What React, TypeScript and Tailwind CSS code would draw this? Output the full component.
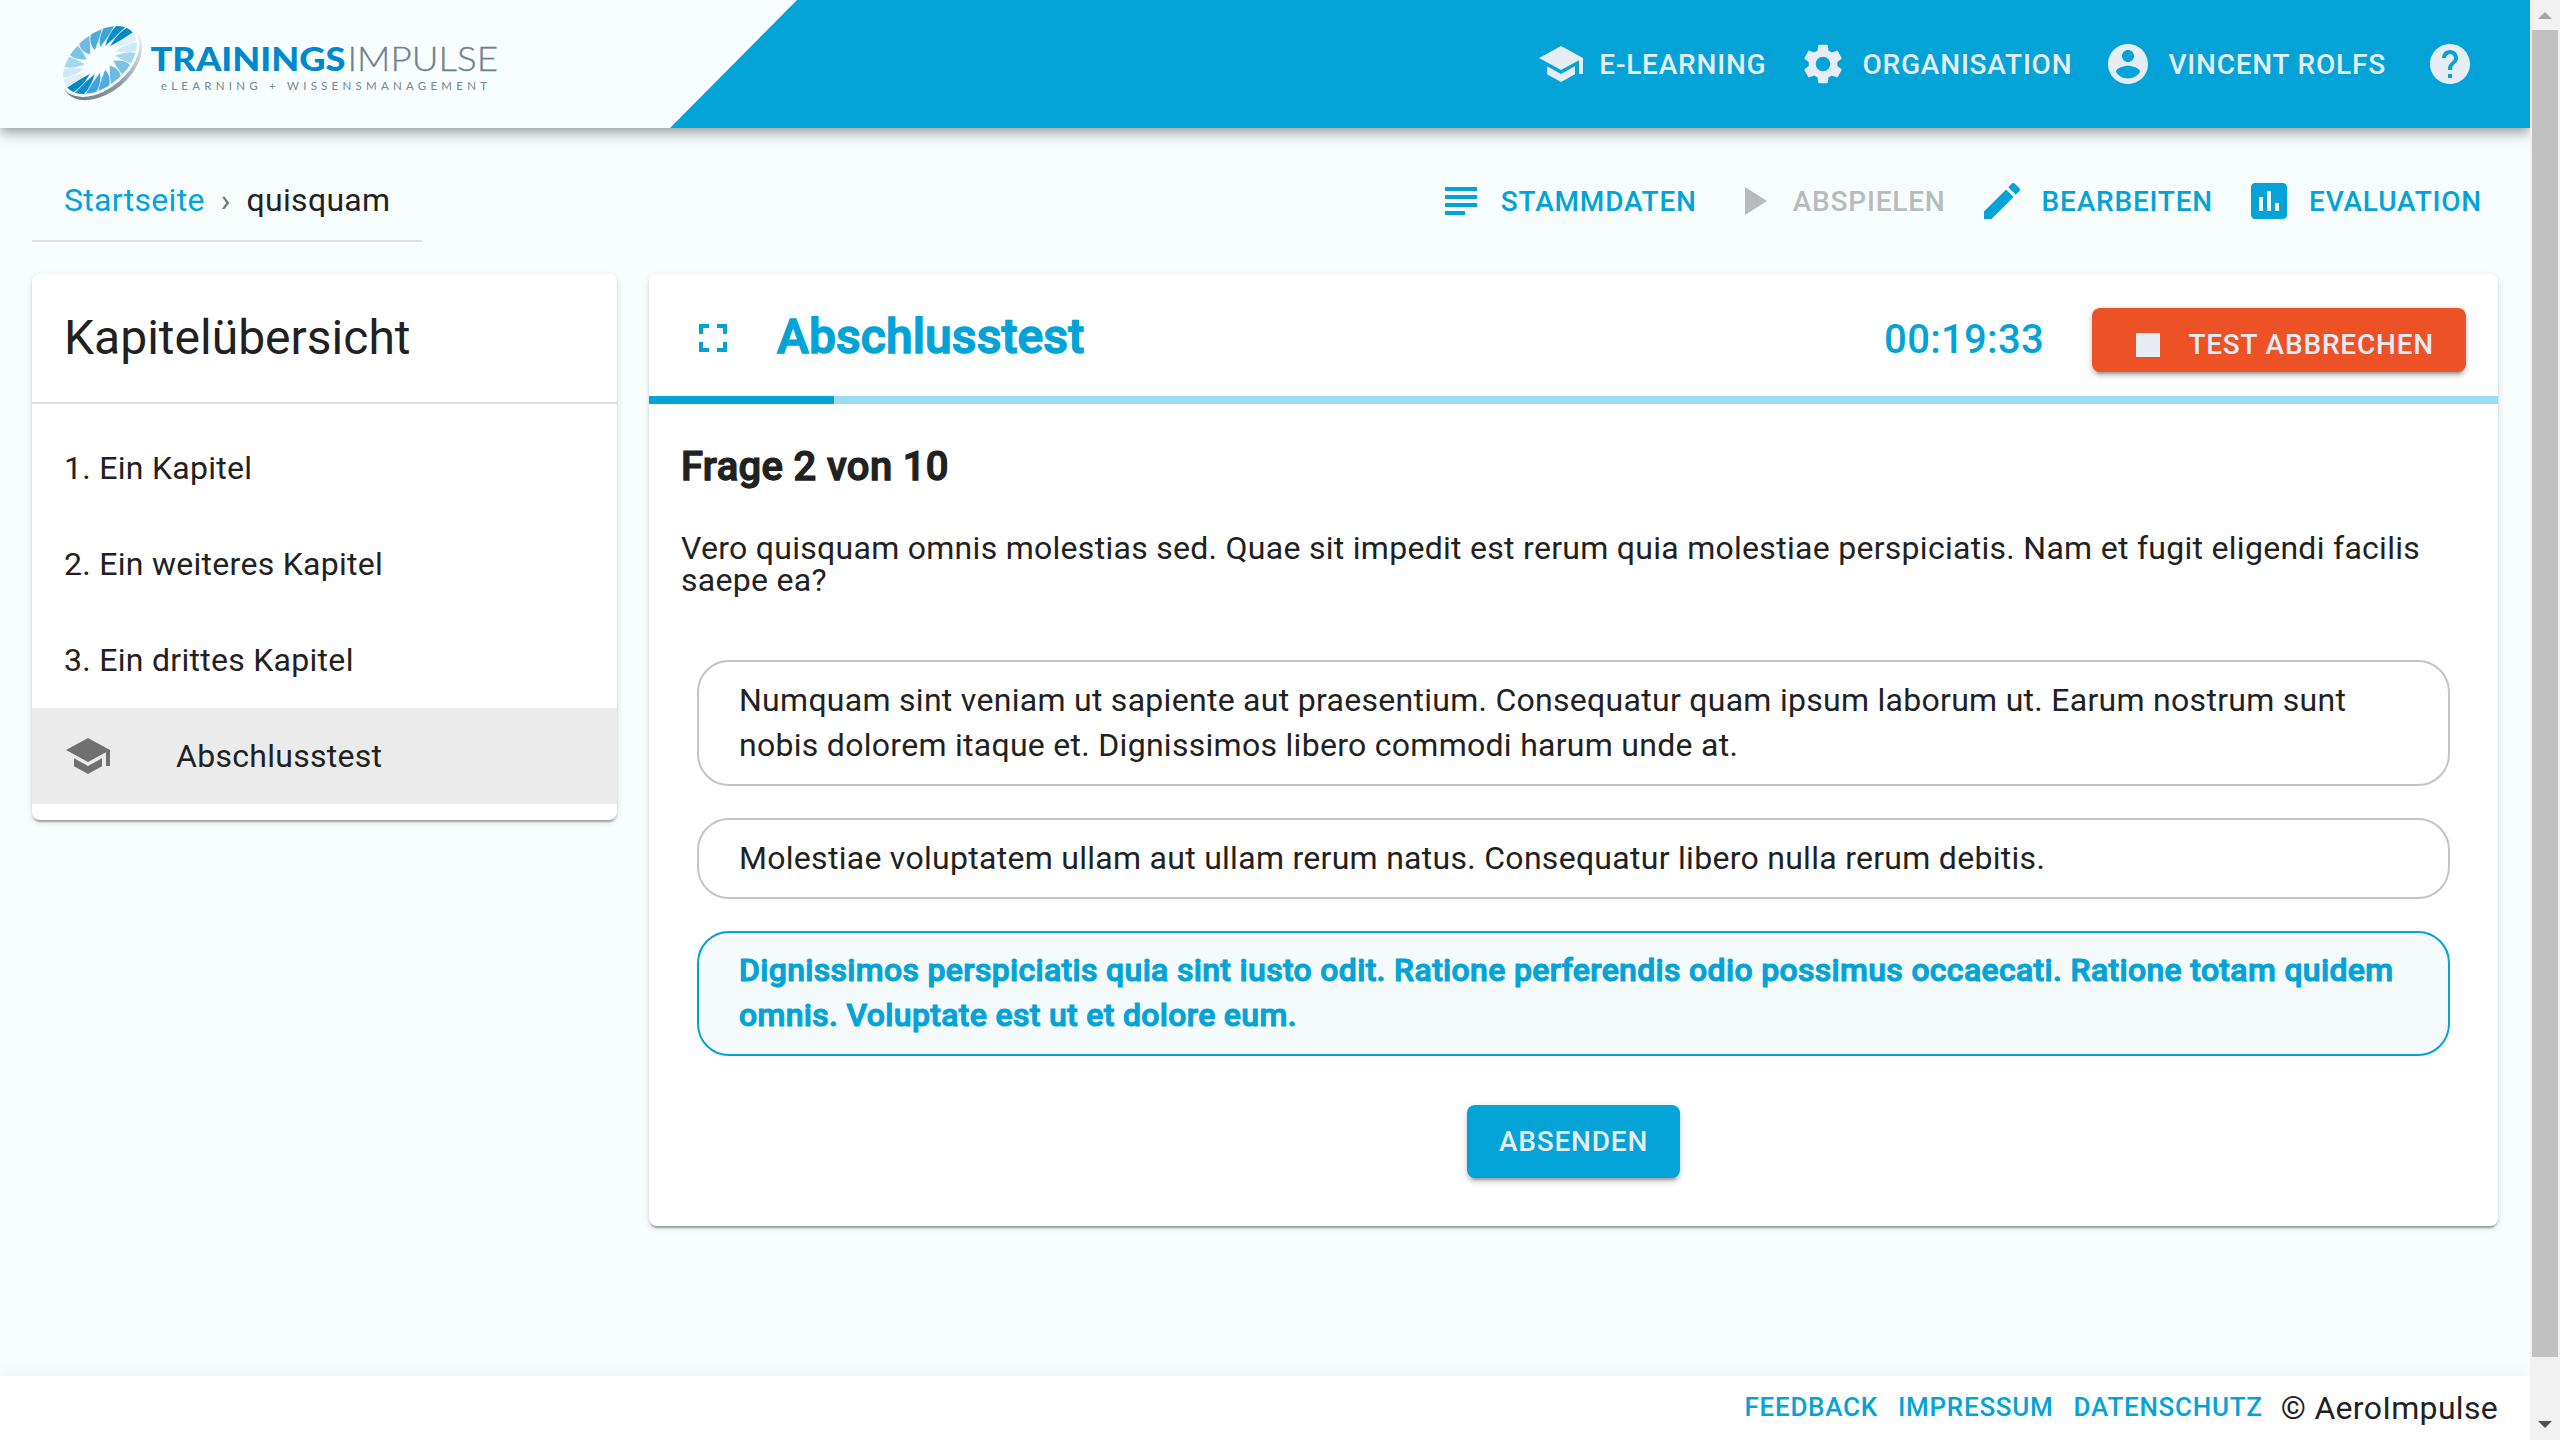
import React from "react";

const PATHS = {
  school: "M5 13.18v4L12 21l7-3.82v-4L12 17l-7-3.82zM12 3L1 9l11 6 9-4.91V17h2V9L12 3z",
  settings:
    "M19.14 12.94c.04-.3.06-.61.06-.94 0-.32-.02-.64-.07-.94l2.03-1.58c.18-.14.23-.41.12-.61l-1.92-3.32c-.12-.22-.37-.29-.59-.22l-2.39.96c-.5-.38-1.03-.7-1.62-.94l-.36-2.54c-.04-.24-.24-.41-.48-.41h-3.84c-.24 0-.43.17-.47.41l-.36 2.54c-.59.24-1.13.57-1.62.94l-2.39-.96c-.22-.08-.47 0-.59.22L2.74 8.87c-.12.21-.08.47.12.61l2.03 1.58c-.05.3-.09.63-.09.94s.02.64.07.94l-2.03 1.58c-.18.14-.23.41-.12.61l1.92 3.32c.12.22.37.29.59.22l2.39-.96c.5.38 1.03.7 1.62.94l.36 2.54c.05.24.24.41.48.41h3.84c.24 0 .44-.17.47-.41l.36-2.54c.59-.24 1.13-.56 1.62-.94l2.39.96c.22.08.47 0 .59-.22l1.92-3.32c.12-.22.07-.47-.12-.61l-2.01-1.58zM12 15.6c-1.98 0-3.6-1.62-3.6-3.6s1.62-3.6 3.6-3.6 3.6 1.62 3.6 3.6-1.62 3.6-3.6 3.6z",
  account:
    "M12 2C6.48 2 2 6.48 2 12s4.48 10 10 10 10-4.48 10-10S17.52 2 12 2zm0 3c1.66 0 3 1.34 3 3s-1.34 3-3 3-3-1.34-3-3 1.34-3 3-3zm0 14.2c-2.5 0-4.71-1.28-6-3.22.03-1.99 4-3.08 6-3.08 1.99 0 5.97 1.09 6 3.08-1.29 1.94-3.5 3.22-6 3.22z",
  help: "M12 2C6.48 2 2 6.48 2 12s4.48 10 10 10 10-4.48 10-10S17.52 2 12 2zm1 17h-2v-2h2v2zm2.07-7.75l-.9.92C13.45 12.9 13 13.5 13 15h-2v-.5c0-1.1.45-2.1 1.17-2.83l1.24-1.26c.37-.36.59-.86.59-1.41 0-1.1-.9-2-2-2s-2 .9-2 2H8c0-2.21 1.79-4 4-4s4 1.79 4 4c0 .88-.36 1.68-.93 2.25z",
  subject: "M14 17H4v2h10v-2zm6-8H4v2h16V9zM4 15h16v-2H4v2zM4 5v2h16V5H4z",
  play: "M8 5v14l11-7z",
  edit: "M3 17.25V21h3.75L17.81 9.94l-3.75-3.75L3 17.25zM20.71 7.04c.39-.39.39-1.02 0-1.41l-2.34-2.34c-.39-.39-1.02-.39-1.41 0l-1.83 1.83 3.75 3.75 1.83-1.83z",
  assessment:
    "M19 3H5c-1.1 0-2 .9-2 2v14c0 1.1.9 2 2 2h14c1.1 0 2-.9 2-2V5c0-1.1-.9-2-2-2zM9 17H7v-7h2v7zm4 0h-2V7h2v10zm4 0h-2v-4h2v4z",
  fullscreen: "M7 14H5v5h5v-2H7v-3zm-2-4h2V7h3V5H5v5zm12 7h-3v2h5v-5h-2v3zM14 5v2h3v3h2V5h-5z",
  stop: "M6 6h12v12H6z",
};

function Icon({ name, className = "" }: { name: keyof typeof PATHS; className?: string }) {
  return (
    <svg viewBox="0 0 24 24" fill="currentColor" className={`size-12 shrink-0 ${className}`}>
      <path d={PATHS[name]} />
    </svg>
  );
}

// Half a turn of turbine blades, from the darkest to the palest; the disc shows it twice.
const BLADE_COLORS = ["#0088cb", "#0a8dce", "#3fa5d9", "#4fabdb", "#6dbbe2", "#7cc3e6", "#a5d6ee", "#d0e9f6", "#dff0fa"];

function Logo() {
  return (
    <svg viewBox="0 0 460 100" className="h-[100px] w-[460px]" aria-label="Trainingsimpulse">
      <defs>
        <linearGradient id="rim" x1="0" y1="0" x2="1" y2="0">
          <stop offset="0" stopColor="#6d7d86" />
          <stop offset="0.5" stopColor="#8d9aa2" />
          <stop offset="1" stopColor="#e3e9ec" />
        </linearGradient>
      </defs>
      <g transform="translate(-50 -15)">
        <g transform="translate(102.2 63.2) rotate(-40)">
          <ellipse rx="46" ry="29" fill="url(#rim)" />
        </g>
        <g transform="translate(100 60.2) rotate(-40)">
          <ellipse rx="45.8" ry="28.6" fill="#f8feff" />
        </g>
        <g transform="translate(100 60) rotate(-40) scale(43 26)">
          {[...BLADE_COLORS, ...BLADE_COLORS].map((fill, i) => (
            <path
              key={i}
              fill={fill}
              transform={`rotate(${-i * 20 - 6})`}
              d="M.4 -.12 Q.7 -.27 .98 -.2 A1 1 0 0 1 .99 .1 Q.7 .02 .4 -.12Z"
            />
          ))}
        </g>
        <text x="150.5" y="70.6" fontFamily="Lato" fontWeight="900" fontSize="33" fill="#0088cb" textLength="195" lengthAdjust="spacingAndGlyphs">
          TRAININGS
        </text>
        <text x="347.5" y="70.6" fontFamily="Lato" fontWeight="300" fontSize="33" fill="#6f818c" stroke="#6f818c" strokeWidth="0.3" textLength="150.5" lengthAdjust="spacingAndGlyphs">
          IMPULSE
        </text>
        <text x="161" y="90" fontFamily="Lato" fontWeight="400" fontSize="11.5" fill="#74868f" textLength="326">
          eLEARNING + WISSENSMANAGEMENT
        </text>
      </g>
    </svg>
  );
}

function NavItem({ icon, label, className }: { icon: keyof typeof PATHS; label: string; className: string }) {
  return (
    <a className={`flex items-center ${className}`}>
      <Icon name={icon} />
      <span className="pt-0.5">{label}</span>
    </a>
  );
}

function Header() {
  return (
    <header className="relative z-10 flex h-32 shrink-0 items-center justify-between bg-[#03a3d7] shadow-[0_4px_8px_-2px_rgba(0,0,0,0.2),0_8px_10px_0_rgba(0,0,0,0.14),0_2px_20px_0_rgba(0,0,0,0.12)]">
      <div className="h-full w-[797px] bg-[#f8feff] pl-[50px] pt-[15px] [clip-path:polygon(0_0,100%_0,670px_100%,0_100%)]">
        <Logo />
      </div>
      <nav className="flex items-center pr-14 text-[28px] font-medium tracking-[0.8px] text-[#e6edf4]">
        <NavItem icon="school" label="E-LEARNING" className="mr-[33px] gap-3.5" />
        <NavItem icon="settings" label="ORGANISATION" className="mr-8 gap-[15px]" />
        <NavItem icon="account" label="VINCENT ROLFS" className="mr-10 gap-4" />
        <Icon name="help" />
      </nav>
    </header>
  );
}

function Toolbar() {
  return (
    <div className="flex h-[146px] shrink-0 items-start justify-between px-8 pt-8">
      <div className="flex h-[82px] w-[390px] items-center border-b-2 border-[#dadfdf] px-8 pb-[1px] text-[32px] tracking-[0.3px]">
        <span className="text-[#03a3d7]">Startseite</span>
        <span className="px-4 text-[#6f7272]">›</span>
        <span>quisquam</span>
      </div>
      <div className="flex items-center pr-4 pt-[17px] text-[28px] font-medium tracking-[0.8px] text-[#03a3d7]">
        <NavItem icon="subject" label="STAMMDATEN" className="mr-8 gap-4" />
        <NavItem icon="play" label="ABSPIELEN" className="mr-8 gap-4 text-[#b7bbbc]" />
        <NavItem icon="edit" label="BEARBEITEN" className="mr-8 gap-4" />
        <NavItem icon="assessment" label="EVALUATION" className="gap-4" />
      </div>
    </div>
  );
}

const CARD =
  "rounded-lg bg-white shadow-[0_4px_2px_-2px_rgba(0,0,0,0.2),0_2px_2px_0_rgba(0,0,0,0.14),0_2px_6px_0_rgba(0,0,0,0.12)]";
const BUTTON_SHADOW =
  "shadow-[0_6px_2px_-4px_rgba(0,0,0,0.2),0_4px_4px_0_rgba(0,0,0,0.14),0_2px_10px_0_rgba(0,0,0,0.12)]";

function Sidebar() {
  return (
    <aside className={`w-[585px] shrink-0 ${CARD}`}>
      <h2 className="flex h-[130px] items-center border-b-2 border-[#e0e0e0] px-8 text-[48px]">Kapitelübersicht</h2>
      <ul className="py-4 text-[32px] tracking-[0.285px]">
        {["1. Ein Kapitel", "2. Ein weiteres Kapitel", "3. Ein drittes Kapitel"].map((t) => (
          <li key={t} className="flex h-24 items-center px-8">
            {t}
          </li>
        ))}
        <li className="flex h-24 items-center bg-[#ebebeb] px-8">
          <Icon name="school" className="mr-16 text-[#6f6f6f]" />
          Abschlusstest
        </li>
      </ul>
    </aside>
  );
}

function Answer({ text, selected = false }: { text: string; selected?: boolean }) {
  return (
    <div
      className={`rounded-[32px] border-2 px-10 ${
        selected
          ? "border-[#03a3d7] bg-[#f5fafd] pb-[17px] pt-[15px] font-medium tracking-[0.32px] text-[#03a3d7] [-webkit-text-stroke:1.07px_currentColor]"
          : "border-[#c4c4c4] py-4 tracking-[0.285px]"
      }`}
    >
      {text}
    </div>
  );
}

function Test() {
  return (
    <main className={`h-[952px] w-[1849px] ${CARD}`}>
      <div className="flex h-[122px] items-center justify-between pl-10 pr-8">
        <div className="flex items-center pt-[5px] text-[#03a3d7]">
          <Icon name="fullscreen" />
          <h1 className="ml-10 pb-0.5 text-[48px] font-medium leading-none tracking-[0.1px] [-webkit-text-stroke:1.5px_currentColor]">
            Abschlusstest
          </h1>
        </div>
        <div className="flex items-center">
          <span className="mr-12 pt-[9px] text-[40px] font-medium tracking-[0.3px] text-[#03a3d7]">00:19:33</span>
          <button
            className={`mt-[10px] flex h-16 w-[374px] items-center justify-end gap-4 rounded-lg bg-[#ed5126] pr-8 pt-2.5 text-[28px] font-medium tracking-[0.8px] text-[#e6edf4] ${BUTTON_SHADOW}`}
          >
            <Icon name="stop" />
            TEST ABBRECHEN
          </button>
        </div>
      </div>
      <div className="h-2 bg-[#9cdcef]">
        <div className="h-full w-[10%] bg-[#03a3d7]" />
      </div>
      <div className="px-8 pt-[39px]">
        <h3 className="text-[40px] font-medium leading-[48px] tracking-[0.34px] [-webkit-text-stroke:1.25px_currentColor]">
          Frage 2 von 10
        </h3>
        <p className="mt-[41px] text-[32px] leading-8 tracking-[0.285px]">
          Vero quisquam omnis molestias sed. Quae sit impedit est rerum quia molestiae perspiciatis. Nam et fugit eligendi
          facilis saepe ea?
        </p>
        <div className="mx-4 mt-[64.4px] flex flex-col gap-8 text-[32px] leading-[44.8px]">
          <Answer text="Numquam sint veniam ut sapiente aut praesentium. Consequatur quam ipsum laborum ut. Earum nostrum sunt nobis dolorem itaque et. Dignissimos libero commodi harum unde at." />
          <Answer text="Molestiae voluptatem ullam aut ullam rerum natus. Consequatur libero nulla rerum debitis." />
          <Answer
            selected
            text="Dignissimos perspiciatis quia sint iusto odit. Ratione perferendis odio possimus occaecati. Ratione totam quidem omnis. Voluptate est ut et dolore eum."
          />
        </div>
        <div className="mt-[49px] flex justify-center">
          <button
            className={`h-[73px] rounded-lg bg-[#03a3d7] px-8 text-[28px] font-medium tracking-[0.8px] text-[#e6edf4] ${BUTTON_SHADOW}`}
          >
            ABSENDEN
          </button>
        </div>
      </div>
    </main>
  );
}

function Footer() {
  return (
    <footer className="relative z-10 flex h-16 shrink-0 items-center justify-end bg-white pr-8 shadow-[0_2px_20px_0_rgba(0,0,0,0.07)]">
      <div className="flex gap-5 pb-0.5 text-[26px] font-medium tracking-[0.74px] text-[#03a3d7]">
        <a>FEEDBACK</a>
        <a>IMPRESSUM</a>
        <a>DATENSCHUTZ</a>
      </div>
      <span className="ml-[18px] text-[32px] tracking-[0.3px]">© AeroImpulse</span>
    </footer>
  );
}

function Scrollbar() {
  return (
    <div className="relative z-20 flex h-full w-[30px] shrink-0 flex-col items-center bg-[#f1f1f1]">
      <div className="flex h-[30px] items-center justify-center">
        <svg viewBox="0 0 14 7" className="h-[7px] w-[14px]">
          <path d="M0 7L7 0l7 7z" fill="#a3a3a3" />
        </svg>
      </div>
      <div className="h-[1327px] w-[26px] bg-[#c1c1c1]" />
      <svg viewBox="0 0 14 7" className="mt-16 h-[7px] w-[14px]">
        <path d="M0 0l7 7 7-7z" fill="#505050" />
      </svg>
    </div>
  );
}

export default function App() {
  return (
    <div className="flex h-[1440px] w-[2560px] overflow-hidden bg-[#f7fdfd] font-['Roboto',sans-serif] text-[#212121]">
      <div className="flex h-full w-[2530px] flex-col overflow-hidden">
        <Header />
        <Toolbar />
        <div className="flex flex-1 items-start gap-8 px-8">
          <Sidebar />
          <Test />
        </div>
        <Footer />
      </div>
      <Scrollbar />
    </div>
  );
}
